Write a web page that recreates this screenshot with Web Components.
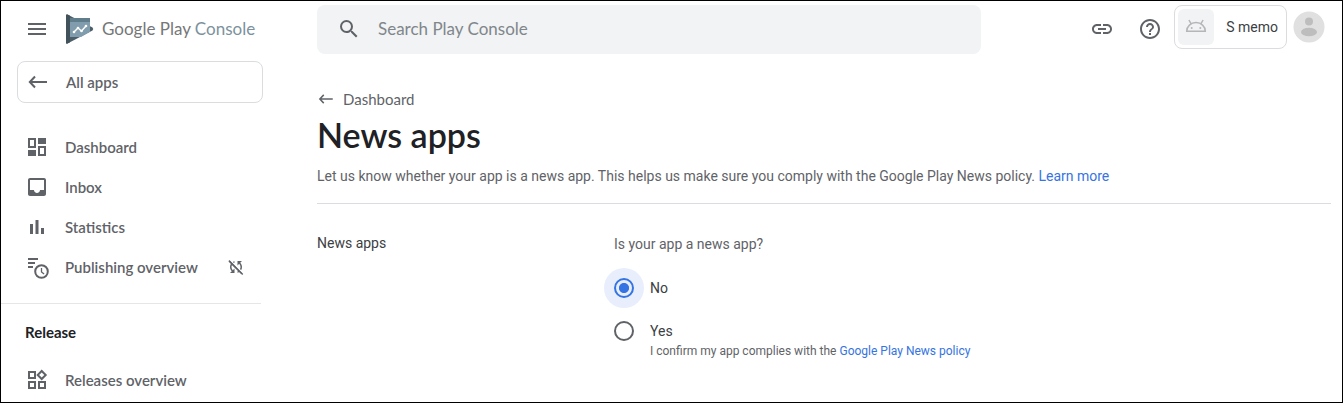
<!DOCTYPE html>
<html lang="en">
<head>
<meta charset="utf-8">
<meta name="viewport" content="width=device-width, initial-scale=1">
<title>News apps | Google Play Console</title>
<style>
  html { height: 100%; }
  body {
    margin: 0;
    min-height: 100%;
    box-sizing: border-box;
    border: 1px solid #000;
    background: #fff;
    display: flex;
    flex-direction: column;
    --brand: Lato, "Open Sans", sans-serif;
    --ink: #202124;
    --muted: #5f6368;
    --line: #dadce0;
    --blue: #3574e2;
    font: 14px/20px Roboto, "Liberation Sans", sans-serif;
    color: var(--muted);
  }
</style>
</head>
<body>
<play-console></play-console>
<script>
const define = (name, html, setup) => {
  const template = document.createElement('template');
  template.innerHTML = html;
  customElements.define(name, class extends HTMLElement {
    connectedCallback() {
      if (this.shadowRoot) return;
      this.attachShadow({ mode: 'open' }).append(template.content.cloneNode(true));
      if (setup) setup(this, this.shadowRoot);
    }
  });
};

const icons = {
  menu: '<path d="M3 18h18v-2H3v2zm0-5h18v-2H3v2zm0-7v2h18V6H3z"/>',
  search: '<path d="M15.5 14h-.79l-.28-.27A6.47 6.47 0 0 0 16 9.5 6.5 6.5 0 1 0 9.5 16c1.61 0 3.09-.59 4.23-1.57l.27.28v.79l5 4.99L20.49 19l-4.99-5zm-6 0C7.01 14 5 11.99 5 9.5S7.01 5 9.5 5 14 7.01 14 9.5 11.99 14 9.5 14z"/>',
  back: '<path d="M9 6.500 3.800 12l5.200 5.500M4 12h17" fill="none" stroke="currentColor" stroke-width="2"/>',
  link: '<path d="M3.900 12c0-1.710 1.390-3.100 3.100-3.100h4V7H7c-2.760 0-5 2.240-5 5s2.240 5 5 5h4v-1.900H7c-1.710 0-3.100-1.390-3.100-3.100zM8 13h8v-2H8v2zm9-6h-4v1.900h4c1.710 0 3.100 1.390 3.100 3.100s-1.390 3.100-3.100 3.100h-4V17h4c2.760 0 5-2.240 5-5s-2.240-5-5-5z"/>',
  help: '<path d="M11 18h2v-2h-2v2zm1-16C6.480 2 2 6.480 2 12s4.480 10 10 10 10-4.480 10-10S17.520 2 12 2zm0 18c-4.410 0-8-3.590-8-8s3.590-8 8-8 8 3.590 8 8-3.590 8-8 8zm0-14c-2.210 0-4 1.790-4 4h2c0-1.100.9-2 2-2s2 .9 2 2c0 2-3 1.750-3 5h2c0-2.250 3-2.500 3-5 0-2.210-1.790-4-4-4z"/>',
  dashboard: '<path fill-rule="evenodd" d="M3 3h8v10H3zM5 5v6h4V5zM13 3h8v6h-8zM3 15h8v6H3zM13 11h8v10h-8zM15 13v6h4v-6z"/>',
  inbox: '<path d="M19 3H4.990c-1.110 0-1.980.89-1.980 2L3 19c0 1.100.88 2 1.990 2H19c1.100 0 2-.9 2-2V5c0-1.110-.9-2-2-2zm0 12h-4c0 1.660-1.350 3-3 3s-3-1.340-3-3H4.990V5H19v10z"/>',
  statistics: '<path d="M5 9h3v10H5zM10.500 5h3v14h-3zM16 13h3v6h-3z"/>',
  publishing: '<path d="M3 3h10v2H3zM3 7h7v2H3zM3 11h5v2H3z"/><circle cx="16.500" cy="16.500" r="6.300" fill="#fff" stroke="currentColor" stroke-width="2"/><path d="M16.500 13v4l2.600 2" fill="none" stroke="currentColor" stroke-width="1.300"/>',
  syncOff: '<path d="M10 6.350V4.260c-.8.210-1.550.54-2.230.96l1.460 1.460c.25-.12.5-.24.770-.33zm-7.140-.94 2.360 2.360A7.980 7.980 0 0 0 4 12c0 2.210.91 4.200 2.360 5.640L4 20h6v-6l-2.240 2.240A6.003 6.003 0 0 1 6 12c0-1 .25-1.940.68-2.770l8.080 8.080c-.25.130-.5.250-.77.340v2.090c.8-.21 1.550-.54 2.230-.96l2.360 2.360 1.270-1.270L4.140 4.140 2.860 5.410zM20 4h-6v6l2.240-2.240A6.003 6.003 0 0 1 18 12c0 1-.25 1.940-.68 2.770l1.460 1.460A7.980 7.980 0 0 0 20 12c0-2.210-.91-4.200-2.360-5.640L20 4z"/><path d="M2.500 3.500 21 22" stroke="currentColor" stroke-width="2"/>',
  releases: '<path fill-rule="evenodd" d="M3 3h8v8H3zM5 5v4h4V5zM3 13h8v8H3zM5 15v4h4v-4zM13 13h8v8h-8zM15 15v4h4v-4zM16.700 1.600l5.400 5.400-5.400 5.400L11.300 7zM16.700 4.400L14.100 7l2.600 2.600L19.300 7z"/>',
  android: '<path d="M2.700 16.200a9.300 8.600 0 0 1 18.600 0zM7.300 9.200 4.900 5M16.700 9.200 19.100 5" fill="none" stroke="currentColor" stroke-width="1.500"/><circle cx="7.700" cy="13" r="1"/><circle cx="16.300" cy="13" r="1"/>'
};

define('ui-icon', `
  <style>
    :host { display: block; flex: none; width: 24px; height: 24px; }
    svg { display: block; width: 100%; height: 100%; fill: currentColor; }
  </style>
  <svg viewBox="0 0 24 24" aria-hidden="true"></svg>
`, (host, root) => { root.querySelector('svg').innerHTML = icons[host.getAttribute('name')]; });

define('console-logo', `
  <style>
    :host { display: block; }
    a { display: flex; align-items: center; gap: 8px; color: #757779; text-decoration: none; font: 17px/24px var(--brand); white-space: nowrap; }
    svg { display: block; flex: none; width: 28px; height: 30px; }
    span { color: #7c919d; }
  </style>
  <a href="#home">
    <svg viewBox="0 0 28 30" aria-hidden="true">
      <path d="M0 1.500Q0 0 1.500.5L26.500 13.500Q28 15 26.500 16.500L1.500 29.500Q0 30 0 28.500z" fill="#4c5f69"/>
      <path d="M0 1.500Q0 0 1.500.5L4 1.800V28.200L1.500 29.500Q0 30 0 28.500z" fill="#42525b"/>
      <path d="M4 4h20v13.800L15 23H4z" fill="#819dad"/>
      <path d="M4 4h20v4H4z" fill="#607d8b"/>
      <path d="M8 18l4-4 3.500 3L20 12" fill="none" stroke="#fff" stroke-width="1.400"/>
      <g fill="#fff"><circle cx="8" cy="18" r="1.300"/><circle cx="12" cy="14" r="1.300"/><circle cx="15.500" cy="17" r="1.300"/><circle cx="20" cy="12" r="1.300"/></g>
    </svg>
    <div>Google Play <span>Console</span></div>
  </a>
`);

define('search-box', `
  <style>
    :host { display: block; }
    label { display: flex; align-items: center; gap: 17px; height: 49px; box-sizing: border-box; padding: 0 20px 2px; border-radius: 8px; background: #f1f3f4; color: var(--muted); }
    input { flex: 1; min-width: 0; border: 0; padding: 0; background: none; outline: 0; color: var(--ink); font: 17px/24px var(--brand); }
    input::placeholder { color: #80868b; opacity: 1; }
  </style>
  <label><ui-icon name="search"></ui-icon><input type="text" aria-label="Search Play Console" placeholder="Search Play Console"></label>
`);

define('icon-button', `
  <style>
    :host { display: block; flex: none; }
    button { display: block; border: 0; padding: 0; background: none; color: inherit; }
  </style>
  <button type="button"><slot></slot></button>
`, (host, root) => root.querySelector('button').setAttribute('aria-label', host.getAttribute('label')));

define('app-chip', `
  <style>
    :host { display: block; flex: none; }
    button { display: flex; align-items: center; gap: 12px; height: 44px; box-sizing: border-box; padding: 0 8px 0 3px; border: 1px solid var(--line); border-radius: 8px; background: #fff; color: #3c4043; font: inherit; }
    .tile { display: grid; place-items: center; width: 36px; height: 36px; border-radius: 6px; background: #f1f3f4; color: #b4b6b8; }
  </style>
  <button type="button"><span class="tile"><ui-icon name="android"></ui-icon></span><slot></slot></button>
`);

define('user-avatar', `
  <style>
    :host { display: block; flex: none; }
    button { display: block; border: 0; padding: 0; background: none; }
    svg { display: block; width: 32px; height: 32px; }
  </style>
  <button type="button" aria-label="Account">
    <svg viewBox="0 0 32 32" aria-hidden="true"><circle cx="16" cy="16" r="15.500" fill="#e0e0e0"/><circle cx="16" cy="10.500" r="4" fill="#bdbdbd"/><ellipse cx="16" cy="21" rx="8" ry="4.300" fill="#bdbdbd"/></svg>
  </button>
`);

define('top-bar', `
  <style>
    :host { display: flex; padding: 4px 17px 0 24px; }
    .brand { display: flex; align-items: center; gap: 17px; flex: none; width: 292px; height: 48px; color: var(--muted); }
    search-box { flex: 0 1 664px; min-width: 0; }
    .tools { display: flex; align-items: center; gap: 24px; flex: none; height: 48px; margin-left: auto; color: var(--muted); }
    .account { display: flex; align-items: center; gap: 6px; align-self: flex-start; height: 44px; margin-left: -12px; }
  </style>
  <div class="brand"><icon-button label="Menu"><ui-icon name="menu"></ui-icon></icon-button><console-logo></console-logo></div>
  <search-box></search-box>
  <div class="tools">
    <icon-button label="Copy link"><ui-icon name="link"></ui-icon></icon-button>
    <icon-button label="Help"><ui-icon name="help"></ui-icon></icon-button>
    <div class="account"><app-chip>S memo</app-chip><user-avatar></user-avatar></div>
  </div>
`);

define('nav-item', `
  <style>
    :host { display: block; }
    a { display: flex; align-items: center; height: 40px; padding: 0 18px 0 24px; gap: 16px; color: var(--muted); text-decoration: none; font: 600 15px/20px var(--brand); }
    span { flex: 1; }
    ::slotted(ui-icon) { width: 18px; height: 18px; }
  </style>
  <a><ui-icon></ui-icon><span></span><slot></slot></a>
`, (host, root) => {
  const icon = document.createElement('ui-icon');
  icon.setAttribute('name', host.getAttribute('icon'));
  root.querySelector('ui-icon').replaceWith(icon);
  root.querySelector('span').textContent = host.getAttribute('label');
  root.querySelector('a').href = '#' + host.getAttribute('icon');
});

define('side-nav', `
  <style>
    :host { display: block; }
    .all { display: flex; align-items: center; gap: 16px; height: 42px; box-sizing: border-box; margin: 7px 0 24px 16px; padding: 0 8px; border: 1px solid var(--line); border-radius: 8px; color: var(--muted); text-decoration: none; font: 600 15px/20px var(--brand); }
    hr { height: 1px; margin: 16px 2px 0 0; border: 0; background: #e4e6e8; }
    h2 { margin: 0; padding: 18px 24px; color: var(--ink); font: 700 15px/20px var(--brand); }
  </style>
  <nav>
    <a class="all" href="#apps"><ui-icon name="back"></ui-icon>All apps</a>
    <nav-item icon="dashboard" label="Dashboard"></nav-item>
    <nav-item icon="inbox" label="Inbox"></nav-item>
    <nav-item icon="statistics" label="Statistics"></nav-item>
    <nav-item icon="publishing" label="Publishing overview"><ui-icon name="syncOff"></ui-icon></nav-item>
    <hr>
    <h2>Release</h2>
    <nav-item icon="releases" label="Releases overview"></nav-item>
  </nav>
`);

define('page-header', `
  <style>
    :host { display: block; padding-bottom: 17px; border-bottom: 1px solid var(--line); }
    .crumb { display: flex; width: fit-content; align-items: center; gap: 8px; color: var(--muted); text-decoration: none; font: 15px/24px var(--brand); }
    .crumb ui-icon { width: 18px; height: 18px; }
    h1 { margin: 3px 0 10px; color: var(--ink); font: 600 34px/42px var(--brand); }
    p { margin: 0; }
    p a { color: var(--blue); text-decoration: none; }
  </style>
  <a class="crumb" href="#dashboard"><ui-icon name="back"></ui-icon>Dashboard</a>
  <h1>News apps</h1>
  <p>Let us know whether your app is a news app. This helps us make sure you comply with the Google Play News policy. <a href="#learn">Learn more</a></p>
`);

define('news-form', `
  <style>
    :host { display: grid; grid-template-columns: 297px 1fr; padding-top: 29px; }
    h2 { margin: 0; color: #3c4043; font: inherit; }
    fieldset { min-width: 0; margin: 0; padding: 0; border: 0; }
    legend { padding: 1px 0 24px; }
    .option { display: grid; grid-template-columns: 20px 1fr; column-gap: 16px; }
    .option + .option { margin-top: 23px; }
    label { width: fit-content; color: #3c4043; }
    input { appearance: none; box-sizing: border-box; width: 20px; height: 20px; margin: 0; border: 2px solid var(--muted); border-radius: 50%; }
    input:checked { border-color: var(--blue); background: #e8eefc radial-gradient(circle closest-side, var(--blue) 58%, transparent 68%); box-shadow: 0 0 0 10px #e8eefc; }
    p { grid-column: 2; margin: 0; font-size: 12px; }
    p a { color: var(--blue); text-decoration: none; }
  </style>
  <h2>News apps</h2>
  <fieldset>
    <legend>Is your app a news app?</legend>
    <div class="option"><input type="radio" name="news" id="no" checked><label for="no">No</label></div>
    <div class="option"><input type="radio" name="news" id="yes"><label for="yes">Yes</label><p>I confirm my app complies with the <a href="#policy">Google Play News policy</a></p></div>
  </fieldset>
`);

define('play-console', `
  <style>
    :host { display: block; }
    .body { display: grid; grid-template-columns: 262px minmax(0, 1fr); column-gap: 54px; padding-right: 11px; }
    main { padding-top: 33px; }
  </style>
  <top-bar></top-bar>
  <div class="body">
    <side-nav></side-nav>
    <main><page-header></page-header><news-form></news-form></main>
  </div>
`);
</script>
</body>
</html>
